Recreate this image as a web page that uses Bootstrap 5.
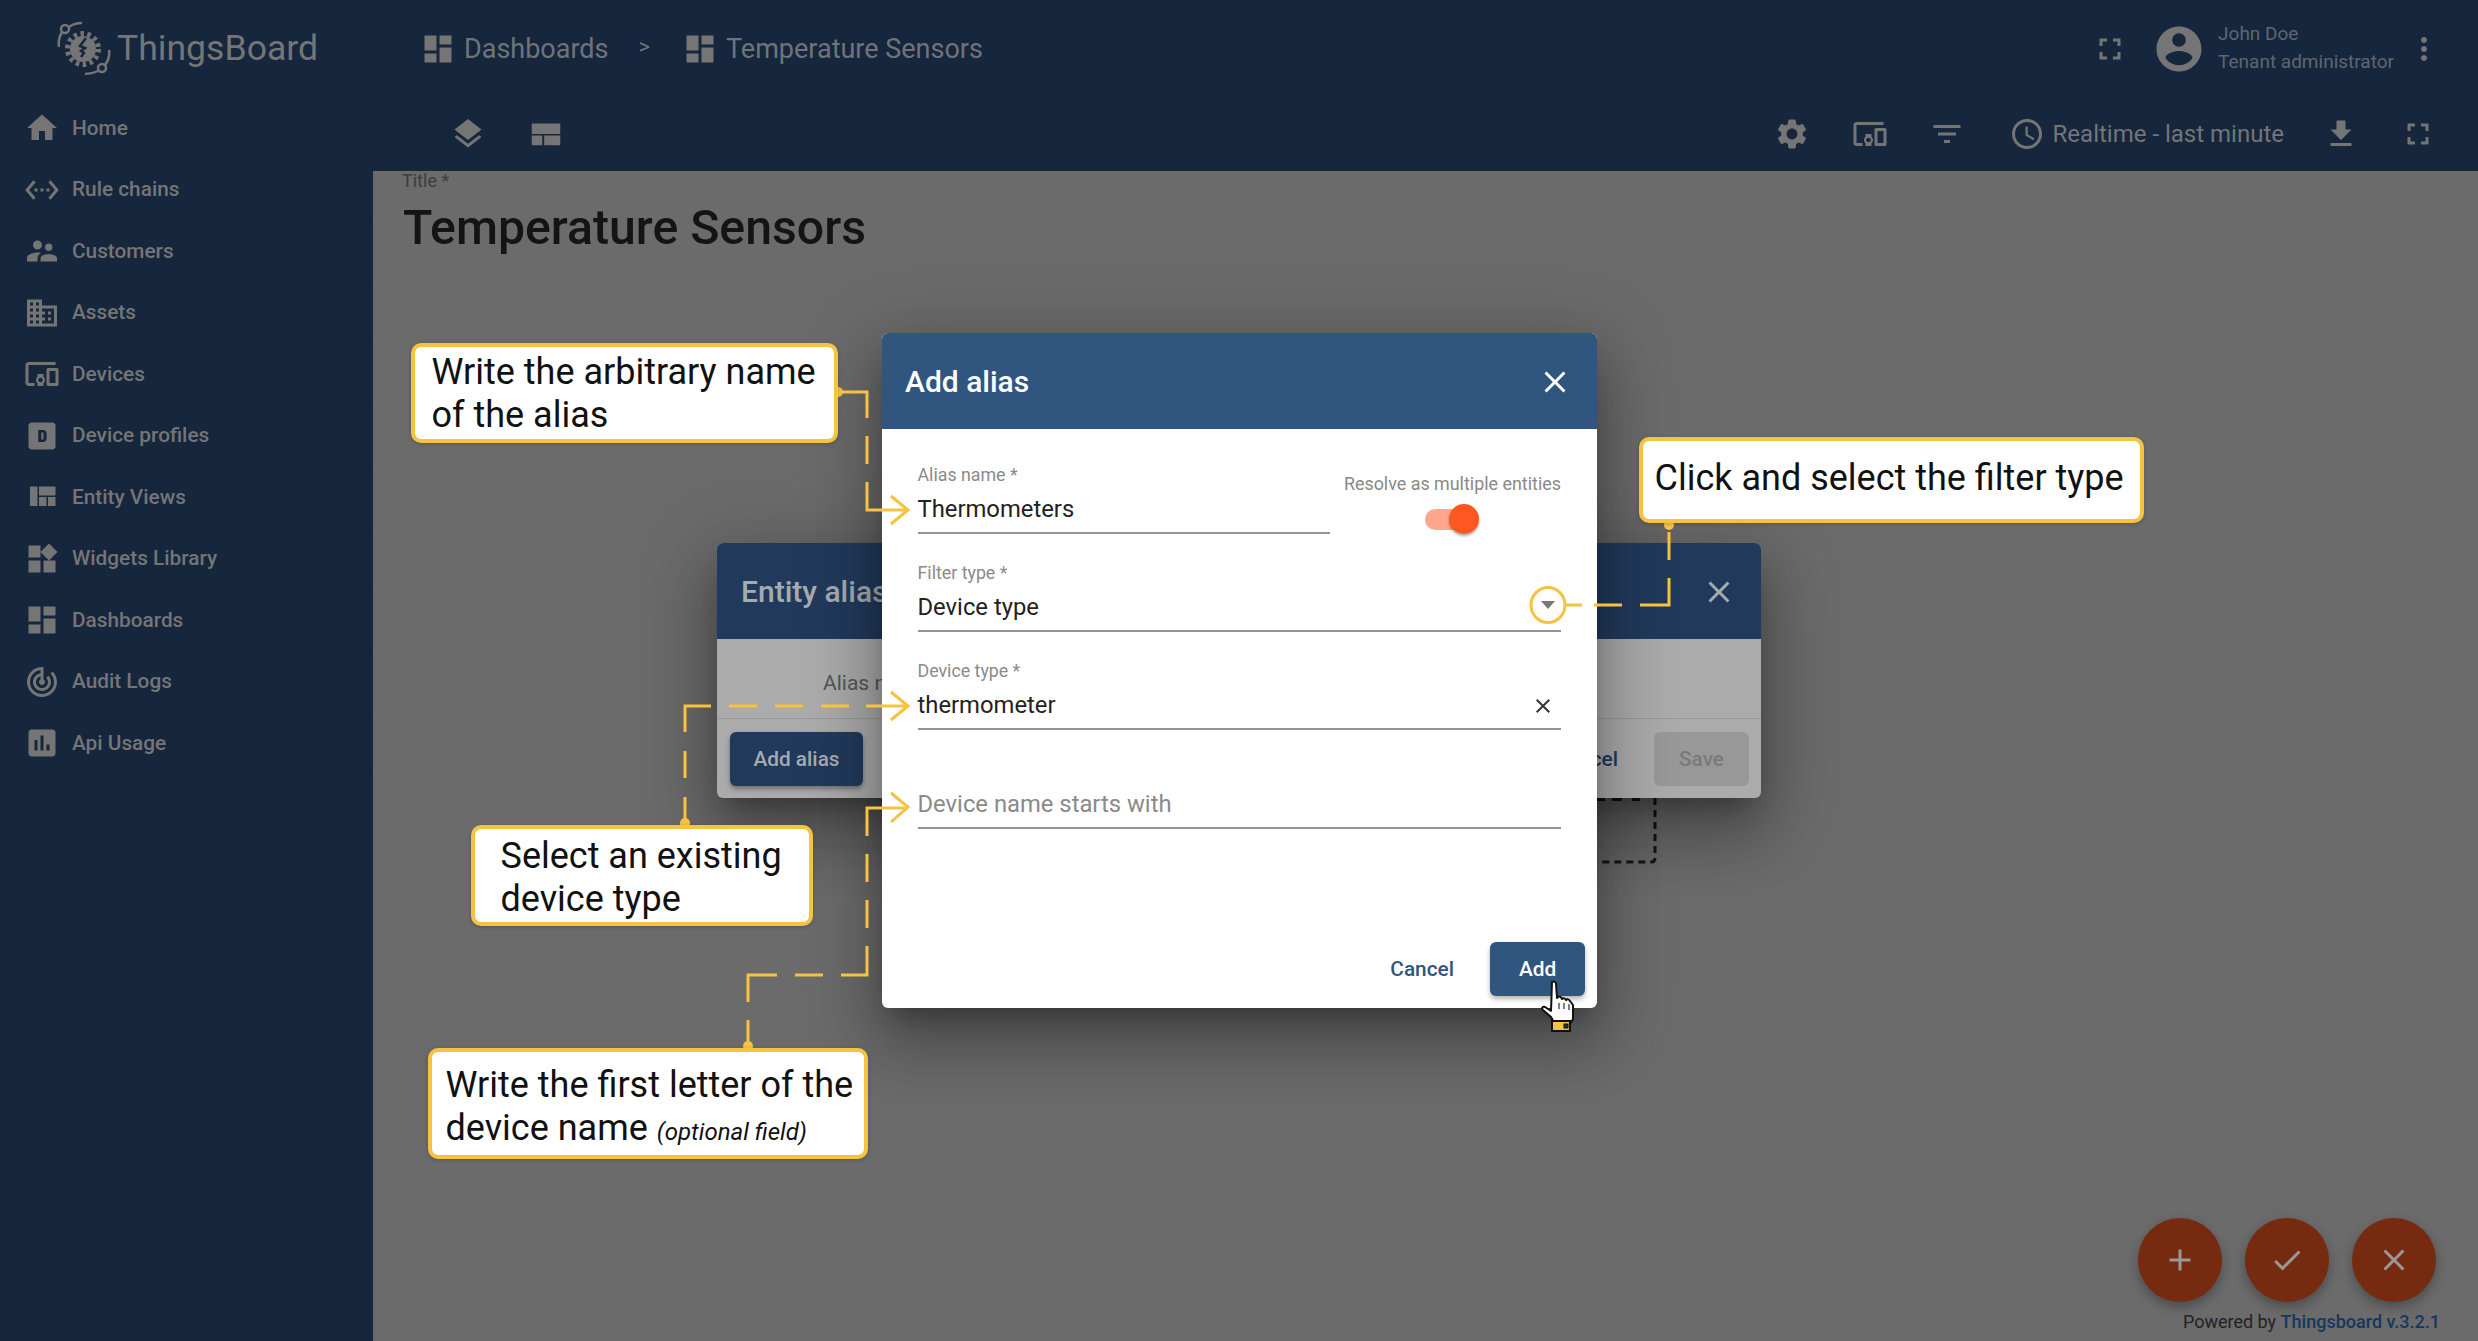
<!DOCTYPE html>
<html lang="en">
<head>
    <meta charset="UTF-8">
    <title>ThingsBoard - Add alias</title>
    <link rel="stylesheet" href="https://cdn.jsdelivr.net/npm/bootstrap@5.3.0/dist/css/bootstrap.min.css">
    <style>
        html, body { margin: 0; background: #6b6b6b; }
        body { font-family: Roboto, "Liberation Sans", sans-serif; }

        .shot { position: relative; width: 2478px; height: 1341px; overflow: hidden; display: flex; background: #6b6b6b; }
        .ico { width: 36px; height: 36px; fill: currentColor; flex: none; display: block; }

        /* sidebar */
        .side { width: 373px; flex: none; background: #16263d; color: #757575; }
        .side-logo { height: 98px; display: flex; align-items: center; padding-left: 56px; gap: 6px; border-bottom: 1px solid #13213a; }
        .side-logo span { font-size: 35.6px; color: #757575; line-height: 1; margin-top: 1px; }
        .side-link { height: 61.5px; display: flex; align-items: center; gap: 12px; padding-left: 24px; border-bottom: 1px solid #13213a;
            font-size: 20.8px; font-weight: 500; color: #757575; text-decoration: none; }

        /* header */
        .main { flex: 1; min-width: 0; }
        .head { height: 171px; background: #16263d; color: #757575; box-shadow: -1px 0 0 #14233a; }
        .head-top { height: 97px; display: flex; align-items: center; padding-left: 47px; padding-right: 36px; }
        .head-bot { height: 74px; display: flex; align-items: center; padding-left: 77px; padding-right: 42px; }
        .crumb { font-size: 27px; color: #6f747a; margin: 2px 0 0 8px; line-height: 1; }
        .crumb-sep { font-size: 22px; color: #70757b; margin: 0 32px 4px 30px; }
        .who { font-size: 19px; line-height: 28px; color: #5f6670; margin: 0 4px 1px 0; }
        .realtime { font-size: 24px; color: #757575; }

        /* content */
        .title-lbl { font-size: 18px; line-height: 20px; color: #3d3d3d; margin-left: 29px; }
        .title-big { font-size: 48.2px; line-height: 56px; font-weight: 500; color: #141414; margin: 9px 0 0 30px; }

        .fab-row { position: absolute; right: 42px; bottom: 39px; display: flex; gap: 23px; }
        .fab { width: 84px; height: 84px; border-radius: 50%; background: #762a10; color: #989898; border: 0; padding: 0; box-shadow: 0 5px 12px rgba(0,0,0,.3);
            display: flex; align-items: center; justify-content: center; }
        .powered { position: absolute; right: 38px; bottom: 7px; font-size: 18px; line-height: 24px; color: #222; }
        .powered b { font-weight: 500; color: #13385f; }

        /* dialogs */
        .dlg { position: absolute; border: 0; border-radius: 6px; overflow: hidden; --bs-card-bg: transparent;
            box-shadow: 0 17px 24px -11px rgba(0,0,0,.3), 0 38px 60px 5px rgba(0,0,0,.2), 0 14px 72px 13px rgba(0,0,0,.17); }
        .dlg-back { left: 717px; top: 543px; width: 1044px; height: 255px; background: #ababab; }
        .dlg-front { left: 882px; top: 333px; width: 715px; height: 675px; background: #fff; }
        .dlg-head { height: 96px; flex: none; display: flex; align-items: center; justify-content: space-between; font-weight: 500; font-size: 30px; }
        .dlg-back .dlg-head { background: #213a5b; color: #a6abb2; padding: 0 24px; }
        .dlg-front .dlg-head { background: #305680; color: #fff; padding: 0 24px 0 23px; }
        .dlg-head .ico { width: 36px; height: 36px; margin-top: 2px; }
        .back-body { height: 80px; font-size: 21px; color: #555; padding: 32px 0 0 106px; line-height: 24px; border-bottom: 1px solid #989898; }
        .back-foot { height: 79px; display: flex; align-items: center; justify-content: space-between; padding: 0 12px 0 13px; }
        .act { height: 54px; border: 0; border-radius: 6px; font-size: 20.8px; font-weight: 500; padding: 0; line-height: 54px; }
        .act-add { width: 133px; background: #213a5b; color: #a6abb2; box-shadow: 0 3px 5px rgba(0,0,0,.35); }
        .act-save { width: 95px; background: #989898; color: #7a7a7a; }
        .act-cancel { color: #213a5b; background: transparent; margin-right: 36px; }
        .act:hover { background: inherit; }

        .dlg-body { flex: 1; padding: 34px 36px 0 35.5px; }
        .fld { border-bottom: 2px solid #949494; padding-bottom: 6px; margin-bottom: 27px; position: relative; }
        .fld-lbl { font-size: 17.8px; line-height: 24px; height: 24px; color: #8a8a8a; }
        .fld-val { font-size: 23.8px; line-height: 34px; margin-top: 5px; color: #222; }
        .fld-ph { color: #8a8a8a; margin-top: 6px; }
        .fld-last { padding-bottom: 6px; }
        .fld-x { position: absolute; right: 6px; top: 35px; width: 24px; height: 24px; fill: #333; }
        .fld-drop { position: absolute; right: 6px; top: 40px; width: 0; height: 0; border-left: 7px solid transparent; border-right: 7px solid transparent; border-top: 8px solid #777; }
        .alias-name { width: 412px; flex: none; }
        .resolve { flex: 1; padding-top: 9px; text-align: right; font-size: 17.9px; line-height: 24px; color: #888; white-space: nowrap; }
        .toggle { position: relative; width: 54px; height: 30px; margin: 8px 82px 0 auto; }
        .toggle-track { position: absolute; left: 0; top: 5px; width: 46px; height: 21px; border-radius: 11px; background: #ffa68c; }
        .toggle-thumb { position: absolute; right: 0; top: 0; width: 30px; height: 30px; border-radius: 50%; background: #ff5722; box-shadow: 0 2px 3px rgba(0,0,0,.35); }
        .dlg-foot { display: flex; justify-content: flex-end; align-items: center; padding: 0 12px 12px 0; }
        .act-cancel2 { color: #305680; margin-right: 36px; }
        .act-add2 { width: 95px; background: #305680; color: #fff; box-shadow: 0 3px 5px rgba(0,0,0,.3); }

        /* annotation */
        .lines { position: absolute; left: 0; top: 0; width: 2478px; height: 1341px; pointer-events: none; }
        .note { position: absolute; background: #fff; border: 4px solid #f5c242; border-radius: 10px; color: #111; font-size: 36px; line-height: 43px; white-space: nowrap; box-shadow: 0 1px 4px rgba(0,0,0,.2); }
        .note em { font-size: 24px; }
        .note-a { left: 411px; top: 343px; width: 427px; height: 100px; padding: 4px 0 0 16.5px; }
        .note-b { left: 1639px; top: 437px; width: 505px; height: 86px; padding: 16px 0 0 11.5px; }
        .note-c { left: 471px; top: 825px; width: 342px; height: 101px; padding: 6px 0 0 25.5px; }
        .note-d { left: 428px; top: 1048px; width: 440px; height: 111px; padding: 12px 0 0 13.5px; }
        .hand { position: absolute; left: 1540px; top: 979px; width: 36px; height: 53px; }
    </style>
</head>
<body>
    <svg width="0" height="0" class="position-absolute">
        <defs>
            <symbol id="i-home" viewBox="0 0 24 24"><path d="M10 20v-6h4v6h5v-8h3L12 3 2 12h3v8z"/></symbol>
            <symbol id="i-rule" viewBox="0 0 24 24"><path d="M7.77 6.76L6.23 5.48.82 12l5.41 6.52 1.54-1.28L3.42 12l4.35-5.24zM7 13h2v-2H7v2zm10-2h-2v2h2v-2zm-6 2h2v-2h-2v2zm6.77-7.52l-1.54 1.28L20.58 12l-4.35 5.24 1.54 1.28L23.18 12l-5.41-6.52z"/></symbol>
            <symbol id="i-cust" viewBox="0 0 24 24"><path d="M16.5 12c1.38 0 2.49-1.12 2.49-2.5S17.88 7 16.5 7C15.12 7 14 8.12 14 9.5s1.12 2.5 2.5 2.5zM9 11c1.66 0 2.99-1.34 2.99-3S10.66 5 9 5C7.34 5 6 6.34 6 8s1.34 3 3 3zm7.5 3c-1.83 0-5.5.92-5.5 2.75V19h11v-2.25c0-1.83-3.67-2.75-5.5-2.75zM9 13c-2.33 0-7 1.17-7 3.5V19h7v-2.25c0-.85.33-2.34 2.37-3.47C10.5 13.1 9.66 13 9 13z"/></symbol>
            <symbol id="i-domain" viewBox="0 0 24 24"><path d="M12 7V3H2v18h20V7H10zM6 19H4v-2h2v2zm0-4H4v-2h2v2zm0-4H4V9h2v2zm0-4H4V5h2v2zm4 12H8v-2h2v2zm0-4H8v-2h2v2zm0-4H8V9h2v2zm0-4H8V5h2v2zm10 12h-8v-2h2v-2h-2v-2h2v-2h-2V9h8v10zm-2-8h-2v2h2v-2zm0 4h-2v2h2v-2z"/></symbol>
            <symbol id="i-dev" viewBox="0 0 24 24"><path d="M3 6h18V4H3c-1.1 0-2 .9-2 2v12c0 1.1.9 2 2 2h4v-2H3V6zm10 6H9v1.78c-.61.55-1 1.33-1 2.22s.39 1.67 1 2.22V20h4v-1.78c.61-.55 1-1.34 1-2.22s-.39-1.67-1-2.22V12zm-2 5.5c-.83 0-1.5-.67-1.5-1.5s.67-1.5 1.5-1.5 1.5.67 1.5 1.5-.67 1.5-1.5 1.5zM22 8h-6c-.5 0-1 .5-1 1v10c0 .5.5 1 1 1h6c.5 0 1-.5 1-1V9c0-.5-.5-1-1-1zm-1 10h-4v-8h4v8z"/></symbol>
            <symbol id="i-prof" viewBox="0 0 24 24"><path fill-rule="evenodd" d="M5 3h14c1.1 0 2 .9 2 2v14c0 1.1-.9 2-2 2H5c-1.1 0-2-.9-2-2V5c0-1.1.9-2 2-2zm4.5 5v8h3.5c1.1 0 2-.9 2-2v-4c0-1.1-.9-2-2-2H9.500zm2 1.700h1.200c.2 0 .3.100.3.300v4c0 .2-.1.300-.3.300h-1.200V9.700z"/></symbol>
            <symbol id="i-quilt" viewBox="0 0 24 24"><path d="M10 18h5v-6h-5v6zm-6 0h5V5H4v13zm12 0h5v-6h-5v6zM10 5v6h11V5H10z"/></symbol>
            <symbol id="i-widg" viewBox="0 0 24 24"><path d="M13 13v8h8v-8h-8zM3 21h8v-8H3v8zM3 3v8h8V3H3zm13.66-1.31L11 7.34 16.66 13l5.66-5.66-5.66-5.65z"/></symbol>
            <symbol id="i-dash" viewBox="0 0 24 24"><path d="M3 13h8V3H3v10zm0 8h8v-6H3v6zm10 0h8V11h-8v10zm0-18v6h8V3h-8z"/></symbol>
            <symbol id="i-track" viewBox="0 0 24 24"><path d="M19.07 4.93l-1.41 1.41C19.1 7.79 20 9.79 20 12c0 4.42-3.58 8-8 8s-8-3.58-8-8c0-4.08 3.05-7.44 7-7.93v2.02C8.16 6.57 6 9.03 6 12c0 3.31 2.69 6 6 6s6-2.69 6-6c0-1.66-.67-3.16-1.76-4.24l-1.41 1.41C15.55 9.9 16 10.9 16 12c0 2.21-1.79 4-4 4s-4-1.79-4-4c0-1.86 1.28-3.41 3-3.86v2.14c-.6.35-1 .98-1 1.72 0 1.1.9 2 2 2s2-.9 2-2c0-.74-.4-1.38-1-1.72V2h-1C6.48 2 2 6.48 2 12s4.48 10 10 10 10-4.48 10-10c0-2.76-1.12-5.26-2.93-7.07z"/></symbol>
            <symbol id="i-usage" viewBox="0 0 24 24"><path d="M19 3H5c-1.1 0-2 .9-2 2v14c0 1.1.9 2 2 2h14c1.1 0 2-.9 2-2V5c0-1.1-.9-2-2-2zM9 17H7v-7h2v7zm4 0h-2V7h2v10zm4 0h-2v-4h2v4z"/></symbol>
            <symbol id="i-layers" viewBox="0 0 24 24"><path d="M11.990 18.540l-7.370-5.730L3 14.070l9 7 9-7-1.630-1.270-7.380 5.740zM12 16l7.360-5.730L21 9l-9-7-9 7 1.630 1.270L12 16z"/></symbol>
            <symbol id="i-table" viewBox="0 0 24 24"><path d="M2.500 5h19v7h-19zM2.500 13h7v6.500h-7zM10.800 13h10.700v6.500H10.800z"/></symbol>
            <symbol id="i-full" viewBox="0 0 24 24"><path d="M7 14H5v5h5v-2H7v-3zm-2-4h2V7h3V5H5v5zm12 7h-3v2h5v-5h-2v3zM14 5v2h3v3h2V5h-5z"/></symbol>
            <symbol id="i-acct" viewBox="0 0 24 24"><path d="M12 2C6.480 2 2 6.480 2 12s4.480 10 10 10 10-4.480 10-10S17.520 2 12 2zm0 3c1.660 0 3 1.340 3 3s-1.340 3-3 3-3-1.340-3-3 1.340-3 3-3zm0 14.200c-2.500 0-4.710-1.280-6-3.220.030-1.990 4-3.080 6-3.080 1.990 0 5.970 1.090 6 3.080-1.290 1.940-3.500 3.220-6 3.220z"/></symbol>
            <symbol id="i-more" viewBox="0 0 24 24"><path d="M12 8c1.100 0 2-.9 2-2s-.9-2-2-2-2 .9-2 2 .9 2 2 2zm0 2c-1.100 0-2 .9-2 2s.9 2 2 2 2-.9 2-2-.9-2-2-2zm0 6c-1.100 0-2 .9-2 2s.9 2 2 2 2-.9 2-2-.9-2-2-2z"/></symbol>
            <symbol id="i-gear" viewBox="0 0 24 24"><path d="M19.140 12.940c.040-.3.060-.61.060-.94 0-.32-.02-.64-.07-.94l2.030-1.580c.18-.14.23-.41.12-.61l-1.920-3.320c-.12-.22-.37-.29-.59-.22l-2.390.96c-.5-.38-1.030-.7-1.620-.94l-.36-2.540c-.04-.24-.24-.41-.48-.41h-3.840c-.24 0-.43.17-.47.41l-.36 2.540c-.59.24-1.130.57-1.620.94l-2.390-.96c-.22-.08-.47 0-.59.22L2.740 8.870c-.12.21-.08.47.12.61l2.030 1.580c-.05.3-.09.63-.09.94s.02.64.07.94l-2.030 1.580c-.18.14-.23.41-.12.61l1.920 3.320c.12.22.37.29.59.22l2.390-.96c.5.38 1.030.7 1.620.94l.36 2.54c.05.24.24.41.48.41h3.840c.24 0 .44-.17.47-.41l.36-2.540c.59-.24 1.130-.56 1.620-.94l2.390.96c.22.08.47 0 .59-.22l1.920-3.320c.12-.22.07-.47-.12-.61l-2.010-1.580zM12 15.600c-1.980 0-3.600-1.620-3.600-3.600s1.620-3.600 3.600-3.600 3.600 1.620 3.600 3.600-1.620 3.600-3.600 3.600z"/></symbol>
            <symbol id="i-filter" viewBox="0 0 24 24"><path d="M10 18h4v-2h-4v2zM3 6v2h18V6H3zm3 7h12v-2H6v2z"/></symbol>
            <symbol id="i-clock" viewBox="0 0 24 24"><path d="M11.990 2C6.470 2 2 6.480 2 12s4.470 10 9.990 10C17.520 22 22 17.520 22 12S17.520 2 11.990 2zM12 20c-4.420 0-8-3.580-8-8s3.580-8 8-8 8 3.580 8 8-3.580 8-8 8zm.5-13H11v6l5.250 3.150.75-1.230-4.500-2.670z"/></symbol>
            <symbol id="i-down" viewBox="0 0 24 24"><path d="M19 9h-4V3H9v6H5l7 7 7-7zM5 18v2h14v-2H5z"/></symbol>
            <symbol id="i-close" viewBox="0 0 24 24"><path d="M19 6.410L17.590 5 12 10.590 6.410 5 5 6.410 10.590 12 5 17.590 6.410 19 12 13.410 17.590 19 19 17.590 13.410 12z"/></symbol>
            <symbol id="i-add" viewBox="0 0 24 24"><path d="M19 13h-6v6h-2v-6H5v-2h6V5h2v6h6v2z"/></symbol>
            <symbol id="i-check" viewBox="0 0 24 24"><path d="M9 16.170L4.830 12l-1.420 1.410L9 19 21 7l-1.410-1.410z"/></symbol>
        </defs>
    </svg>

    <div class="shot">
        <aside class="side">
            <div class="side-logo">
                <svg width="55" height="55" viewBox="0 0 55 55" fill="none" stroke="#757575">
                    <circle cx="27" cy="28" r="13" fill="#757575" stroke="none"/>
                    <circle cx="27" cy="28" r="15.500" stroke-width="5" stroke-dasharray="3.500 3.500"/>
                    <path d="M30 17l-6 8 5 2-4 3 3 2-3 4" stroke="#16263d" stroke-width="2.500"/>
                    <path d="M3 26C2 20 3 16 6 11" stroke-width="2.500"/>
                    <circle cx="9" cy="8" r="4" stroke-width="2.500"/>
                    <path d="M13 6c4-3 8-4 13-4" stroke-width="2.500"/>
                    <path d="M53 29c1 6-1 11-4 15" stroke-width="2.500"/>
                    <circle cx="46" cy="47" r="4" stroke-width="2.500"/>
                    <path d="M42 50c-4 2-8 3-13 3" stroke-width="2.500"/>
                </svg>
                <span>ThingsBoard</span>
            </div>
            <nav class="nav flex-column flex-nowrap">
                <a class="side-link" href="#"><svg class="ico"><use href="#i-home"/></svg>Home</a>
                <a class="side-link" href="#"><svg class="ico"><use href="#i-rule"/></svg>Rule chains</a>
                <a class="side-link" href="#"><svg class="ico"><use href="#i-cust"/></svg>Customers</a>
                <a class="side-link" href="#"><svg class="ico"><use href="#i-domain"/></svg>Assets</a>
                <a class="side-link" href="#"><svg class="ico"><use href="#i-dev"/></svg>Devices</a>
                <a class="side-link" href="#"><svg class="ico"><use href="#i-prof"/></svg>Device profiles</a>
                <a class="side-link" href="#"><svg class="ico"><use href="#i-quilt"/></svg>Entity Views</a>
                <a class="side-link" href="#"><svg class="ico"><use href="#i-widg"/></svg>Widgets Library</a>
                <a class="side-link" href="#"><svg class="ico"><use href="#i-dash"/></svg>Dashboards</a>
                <a class="side-link" href="#"><svg class="ico"><use href="#i-track"/></svg>Audit Logs</a>
                <a class="side-link" href="#"><svg class="ico"><use href="#i-usage"/></svg>Api Usage</a>
            </nav>
        </aside>

        <div class="main">
            <header class="head">
                <div class="head-top">
                    <svg class="ico"><use href="#i-dash"/></svg><span class="crumb">Dashboards</span>
                    <span class="crumb-sep">&gt;</span>
                    <svg class="ico"><use href="#i-dash"/></svg><span class="crumb">Temperature Sensors</span>
                    <svg class="ico ms-auto"><use href="#i-full"/></svg>
                    <svg class="ico ms-4" style="width:54px;height:54px"><use href="#i-acct"/></svg>
                    <div class="who ms-2 ps-1"><div>John Doe</div><div>Tenant administrator</div></div>
                    <svg class="ico ms-2"><use href="#i-more"/></svg>
                </div>
                <div class="head-bot">
                    <svg class="ico"><use href="#i-layers"/></svg>
                    <svg class="ico" style="margin-left:42px"><use href="#i-table"/></svg>
                    <svg class="ico ms-auto"><use href="#i-gear"/></svg>
                    <svg class="ico" style="margin-left:42px"><use href="#i-dev"/></svg>
                    <svg class="ico" style="margin-left:41px"><use href="#i-filter"/></svg>
                    <svg class="ico" style="margin-left:44px"><use href="#i-clock"/></svg>
                    <span class="realtime ms-2">Realtime - last minute</span>
                    <svg class="ico" style="margin-left:39px"><use href="#i-down"/></svg>
                    <svg class="ico" style="margin-left:41px"><use href="#i-full"/></svg>
                </div>
            </header>
            <div class="title-lbl">Title *</div>
            <div class="title-big">Temperature Sensors</div>
        </div>

        <div class="fab-row">
            <button class="fab"><svg class="ico"><use href="#i-add"/></svg></button>
            <button class="fab"><svg class="ico"><use href="#i-check"/></svg></button>
            <button class="fab"><svg class="ico"><use href="#i-close"/></svg></button>
        </div>
        <div class="powered">Powered by <b>Thingsboard v.3.2.1</b></div>

        <svg class="lines" fill="none" stroke="#161616" stroke-width="3">
            <path d="M1655 798V858q0 4-4 4H1597" stroke-dasharray="7 5"/>
            <path d="M1597 799h8M1612 799h10M1632 799h8" stroke-width="4"/>
        </svg>

        <div class="card dlg dlg-back">
            <div class="dlg-head">Entity aliases <svg class="ico"><use href="#i-close"/></svg></div>
            <div class="back-body">Alias name</div>
            <div class="back-foot">
                <button class="btn act act-add">Add alias</button>
                <div class="d-flex">
                    <button class="btn act act-cancel">Cancel</button>
                    <button class="btn act act-save">Save</button>
                </div>
            </div>
        </div>

        <div class="card dlg dlg-front">
            <div class="dlg-head">Add alias <svg class="ico"><use href="#i-close"/></svg></div>
            <div class="dlg-body">
                <div class="d-flex">
                    <div class="fld alias-name align-self-start">
                        <div class="fld-lbl">Alias name *</div>
                        <div class="fld-val">Thermometers</div>
                    </div>
                    <div class="resolve">
                        <div>Resolve as multiple entities</div>
                        <div class="toggle"><div class="toggle-track"></div><div class="toggle-thumb"></div></div>
                    </div>
                </div>
                <div class="fld">
                    <div class="fld-lbl">Filter type *</div>
                    <div class="fld-val">Device type</div>
                    <div class="fld-drop"></div>
                </div>
                <div class="fld">
                    <div class="fld-lbl">Device type *</div>
                    <div class="fld-val">thermometer</div>
                    <svg class="fld-x"><use href="#i-close"/></svg>
                </div>
                <div class="fld fld-last">
                    <div class="fld-lbl"></div>
                    <div class="fld-val fld-ph">Device name starts with</div>
                </div>
            </div>
            <div class="dlg-foot">
                <button class="btn act act-cancel2">Cancel</button>
                <button class="btn act act-add2">Add</button>
            </div>
        </div>

        <svg class="lines" fill="none" stroke="#f5c242" stroke-width="3">
            <circle cx="838" cy="392" r="5" fill="#f5c242" stroke="none"/>
            <path d="M836 392H867V418M867 436V464M867 482V510H905M891 496L908 510L891 524"/>
            <circle cx="1669" cy="525" r="5" fill="#f5c242" stroke="none"/>
            <path d="M1669 532V560M1669 578V605H1640M1622 605H1594M1582 605H1566"/>
            <ellipse cx="1548" cy="605" rx="17" ry="17.500"/>
            <circle cx="685" cy="823" r="5" fill="#f5c242" stroke="none"/>
            <path d="M685 825V797M685 778V751M685 732V706H711M729 706H757M775 706H803M821 706H849M866 706H905M891 692L908 706L891 720"/>
            <circle cx="748" cy="1046" r="5" fill="#f5c242" stroke="none"/>
            <path d="M748 1047V1020M748 1002V975H777M795 975H823M841 975H867V946M867 928V900M867 882V854M867 836V808H905M891 793L908 807L891 822"/>
        </svg>

        <div class="note note-a">Write the arbitrary name<br>of the alias</div>
        <div class="note note-b">Click and select the filter type</div>
        <div class="note note-c">Select an existing<br>device type</div>
        <div class="note note-d">Write the first letter of the<br>device name <em>(optional field)</em></div>

        <svg class="hand" viewBox="0 0 36 53">
            <path d="M12 3c2-1 4 0 4 2l1 14 1-1c2-1 3 0 4 2 1-1 3-1 4 1 1-1 3-1 4 1l3 4v14l-3 5H15l-4-7-8-7c-2-2 0-4 2-3l6 4z" fill="#fff" stroke="#111" stroke-width="2" stroke-linejoin="round"/>
            <path d="M19 24v6M24 24v6M29 25v6" stroke="#555" stroke-width="1.500"/>
            <rect x="12" y="42" width="18" height="10" fill="#f5c242" stroke="#111" stroke-width="2"/>
            <rect x="24" y="45" width="4" height="4" fill="#16363d" stroke="#111"/>
        </svg>
    </div>

    <script src="https://cdn.jsdelivr.net/npm/bootstrap@5.3.0/dist/js/bootstrap.bundle.min.js"></script>
</body>
</html>
